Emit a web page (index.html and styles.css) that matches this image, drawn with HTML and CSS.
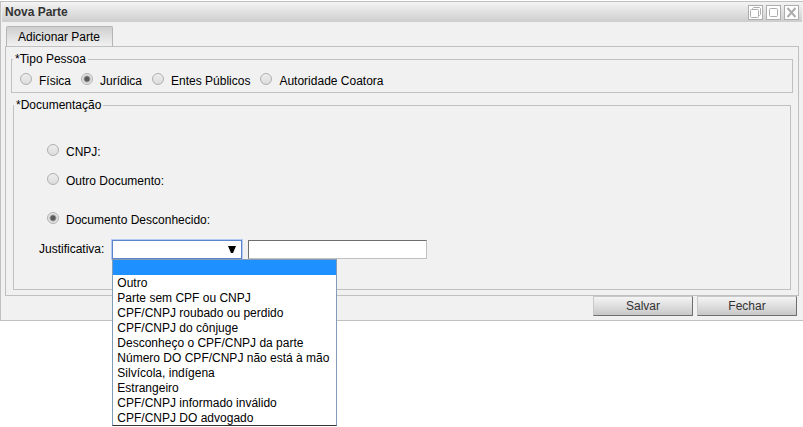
FILE: index.html
```html
<!DOCTYPE html>
<html lang="pt-BR">
<head>
    <meta charset="UTF-8">
    <meta name="viewport" content="width=device-width, initial-scale=1.0">
    <title>Nova Parte</title>
    <link rel="stylesheet" href="styles.css">
</head>
<body>
    <div class="janela">
        <header class="titulo">
            <h1>Nova Parte</h1>
            <div class="controles">
                <button type="button" aria-label="Restaurar">
                    <svg viewBox="0 0 13 13"><path d="M3.5 3.5v-1l1-1h6l1 1v6l-1 1h-1" /><rect x="1.5" y="3.5" width="8" height="8" rx="1" /></svg>
                </button>
                <button type="button" aria-label="Maximizar">
                    <svg viewBox="0 0 13 13"><rect x="2.5" y="2.5" width="8" height="8" rx="1" /></svg>
                </button>
                <button type="button" aria-label="Fechar janela">
                    <svg viewBox="0 0 13 13"><path class="xis" d="M2.5 2l8 9M10.5 2l-8 9" /></svg>
                </button>
            </div>
        </header>

        <form class="corpo">
            <div class="abas">
                <button type="button" class="aba">Adicionar Parte</button>
            </div>
            <div class="painel">
                <fieldset class="tipo">
                    <legend>*Tipo Pessoa</legend>
                    <div class="opcoes">
                        <label class="opcao"><input type="radio" name="tipo">Física</label>
                        <label class="opcao"><input type="radio" name="tipo" checked>Jurídica</label>
                        <label class="opcao"><input type="radio" name="tipo">Entes Públicos</label>
                        <label class="opcao"><input type="radio" name="tipo">Autoridade Coatora</label>
                    </div>
                </fieldset>

                <fieldset class="documentacao">
                    <legend>*Documentação</legend>
                    <div class="documentos">
                        <label class="opcao"><input type="radio" name="doc">CNPJ:</label>
                        <label class="opcao"><input type="radio" name="doc">Outro Documento:</label>
                        <label class="opcao desconhecido"><input type="radio" name="doc" checked>Documento Desconhecido:</label>
                    </div>
                    <div class="justificativa">
                        <label for="motivo">Justificativa:</label>
                        <div class="combo">
                            <select id="motivo">
                                <option></option>
                            </select>
                            <svg class="seta" viewBox="0 0 8 7"><path d="M0 0h8L5 7H3z" /></svg>
                            <!-- lista aberta -->
                            <ul class="lista" role="listbox" aria-label="Justificativa">
                                <li class="ativo" role="option" aria-selected="true"></li>
                                <li role="option">Outro</li>
                                <li role="option">Parte sem CPF ou CNPJ</li>
                                <li role="option">CPF/CNPJ roubado ou perdido</li>
                                <li role="option">CPF/CNPJ do cônjuge</li>
                                <li role="option">Desconheço o CPF/CNPJ da parte</li>
                                <li role="option">Número DO CPF/CNPJ não está à mão</li>
                                <li role="option">Silvícola, indígena</li>
                                <li role="option">Estrangeiro</li>
                                <li role="option">CPF/CNPJ informado inválido</li>
                                <li role="option">CPF/CNPJ DO advogado</li>
                            </ul>
                        </div>
                        <input type="text" class="texto" aria-label="Descrição da justificativa">
                    </div>
                </fieldset>
            </div>
            <div class="acoes">
                <button type="submit">Salvar</button>
                <button type="button">Fechar</button>
            </div>
        </form>
    </div>
</body>
</html>
```
FILE: styles.css
```css
* {
    box-sizing: border-box;
}
body {
    min-height: 100vh;
    margin: 0;
    padding-top: 1px;
    background: #fff;
    color: #000;
    font: 12px/15px "Liberation Sans", Arial, sans-serif;
}
button, input, select {
    margin: 0;
    font: inherit;
    color: inherit;
}

.janela {
    border: 1px solid #c0c0c0;
    border-right: 0;
    background: #f1f1f1;
}
.titulo {
    display: flex;
    align-items: center;
    justify-content: space-between;
    height: 20px;
    margin: 0 1px;
    padding: 0 3px;
    background: linear-gradient(#f4f4f4, #cdcdcd);
}
.titulo h1 {
    margin: 0;
    font-size: 12px;
    line-height: 15px;
    color: #333;
}
.controles {
    display: flex;
    gap: 3px;
}
.controles button {
    width: 15px;
    height: 15px;
    padding: 0;
    border: 1px solid #adadad;
    background: #fff;
}
.controles svg {
    display: block;
    width: 13px;
    height: 13px;
    fill: none;
    stroke: #adadad;
}
.controles .xis {
    stroke-width: 2;
}

.corpo {
    padding: 4px 4px 4px;
}
.abas {
    padding-left: 1px;
}
.aba {
    display: block;
    height: 20px;
    padding: 2px 12px 0 11px;
    border: 1px solid #b5b5b5;
    border-bottom: 0;
    border-radius: 2px 2px 0 0;
    background: linear-gradient(#cfcfcf, #f1f1f1);
}
.painel {
    padding: 5px;
    border: 1px solid #c0c0c0;
}
fieldset {
    min-width: 0;
    margin: 0;
    padding: 0;
    border: 1px solid #c0c0c0;
}
legend {
    padding: 0 2px;
}
.tipo {
    padding: 6px 8px 2px;
}
.tipo legend {
    margin-left: -7px;
}
.opcoes {
    display: flex;
    gap: 10px;
}
.opcao {
    display: flex;
    align-items: flex-start;
    gap: 7px;
    line-height: 17px;
}
.opcao input {
    appearance: none;
    width: 12px;
    height: 12px;
    border: 1px solid #b0b0b0;
    border-radius: 50%;
    background: linear-gradient(#ededed, #dcdcdc);
}
.opcao input:checked {
    background: radial-gradient(circle, #5a5a5a 2px, #e6e6e6 4px);
}

.documentacao {
    margin: 5px 2px 0;
    padding-bottom: 30px;
}
.documentos {
    display: grid;
    gap: 12px;
    padding: 31px 0 11px 33px;
}
.desconhecido {
    margin-top: 10px;
}
.justificativa {
    display: flex;
    align-items: center;
    gap: 6px;
    padding-left: 25px;
}
.combo {
    position: relative;
    margin-left: 2px;
}
.combo select {
    appearance: none;
    display: block;
    width: 130px;
    height: 19px;
    padding: 0 4px;
    border: 1px solid #5b84c9;
    box-shadow: 0 0 0 1px #b3cbf3;
    border-radius: 0;
    background: #fff;
}
.seta {
    position: absolute;
    top: 6px;
    right: 6px;
    width: 8px;
    height: 7px;
}
.lista {
    position: absolute;
    top: 19px;
    left: 0;
    z-index: 10;
    min-width: 225px;
    margin: 0;
    padding: 0;
    border: 1px solid #7f9db9;
    border-bottom: 1px solid #333;
    background: #fff;
    list-style: none;
    white-space: nowrap;
}
.lista li {
    height: 15px;
    padding: 0 3px 0 4px;
    line-height: 17px;
}
.lista .ativo {
    background: #1e90ff;
}
.texto {
    width: 179px;
    height: 19px;
    padding: 0 3px;
    border: 1px solid #c0c0c0;
    border-top-color: #6e6e6e;
    border-left-color: #6e6e6e;
    background: #fff;
}

.acoes {
    display: flex;
    justify-content: flex-end;
    gap: 4px;
    padding-right: 2px;
}
.acoes button {
    width: 100px;
    height: 20px;
    padding: 0;
    border: 1px solid #c8c8c8;
    border-right-color: #6e6e6e;
    border-bottom-color: #6e6e6e;
    background: linear-gradient(#f4f4f4, #c8c8c8);
    color: #333;
}
```
